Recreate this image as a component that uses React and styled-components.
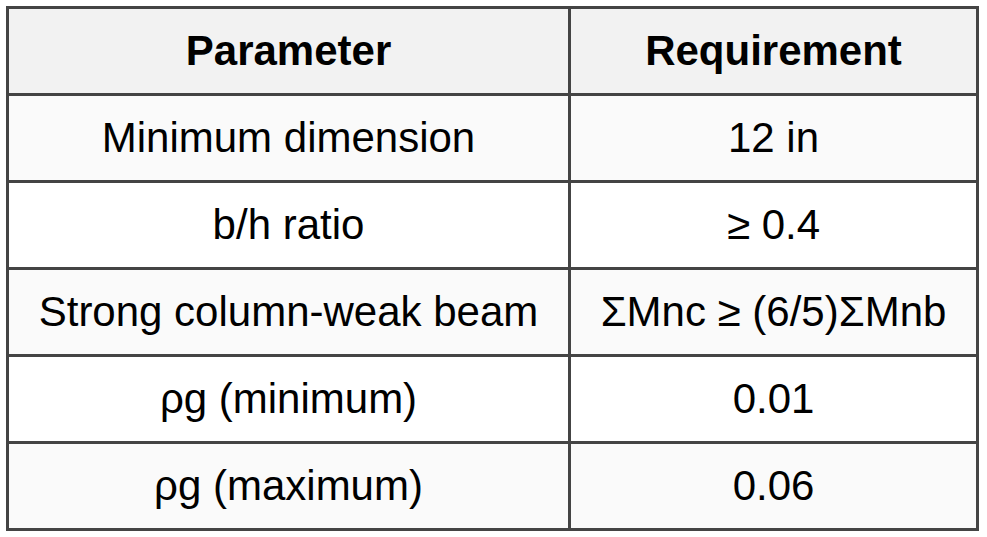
import React from "react";
import styled, { createGlobalStyle } from "styled-components";

const Global = createGlobalStyle`
  html, body { margin: 0; padding: 0; background: #ffffff; }
  body { font-family: "Liberation Sans", Arial, sans-serif; }
`;

const Page = styled.div`
  padding: 6px;
`;

const Table = styled.table`
  border-collapse: separate;
  border-spacing: 0;
  border-top: 3px solid #444444;
  border-left: 3px solid #444444;
  font-family: "Liberation Sans", Arial, sans-serif;
  font-size: 42px;
  color: #000000;
  table-layout: fixed;
`;

const Row = styled.tr`
  background: ${(p) => (p.$shade ? "#fafafa" : "#ffffff")};
`;

const HeadRow = styled.tr`
  background: #f2f2f2;
`;

const HeadCell = styled.th`
  box-sizing: content-box;
  width: ${(p) => p.$w}px;
  height: 84px;
  padding: 0;
  border-right: 3px solid #444444;
  border-bottom: 3px solid #444444;
  font-weight: 700;
  text-align: center;
  vertical-align: middle;
`;

const Cell = styled.td`
  box-sizing: content-box;
  height: 84px;
  padding: 0;
  border-right: 3px solid #444444;
  border-bottom: 3px solid #444444;
  text-align: center;
  vertical-align: middle;
  white-space: nowrap;
`;

const rows = [
  ["Minimum dimension", "12 in"],
  ["b/h ratio", "≥ 0.4"],
  ["Strong column-weak beam", "ΣMnc ≥ (6/5)ΣMnb"],
  ["ρg (minimum)", "0.01"],
  ["ρg (maximum)", "0.06"],
];

export default function App() {
  return (
    <Page>
      <Global />
      <Table>
        <thead>
          <HeadRow>
            <HeadCell $w={559}>Parameter</HeadCell>
            <HeadCell $w={405}>Requirement</HeadCell>
          </HeadRow>
        </thead>
        <tbody>
          {rows.map(([a, b], i) => (
            <Row key={a} $shade={i % 2 === 0}>
              <Cell>{a}</Cell>
              <Cell>{b}</Cell>
            </Row>
          ))}
        </tbody>
      </Table>
    </Page>
  );
}
